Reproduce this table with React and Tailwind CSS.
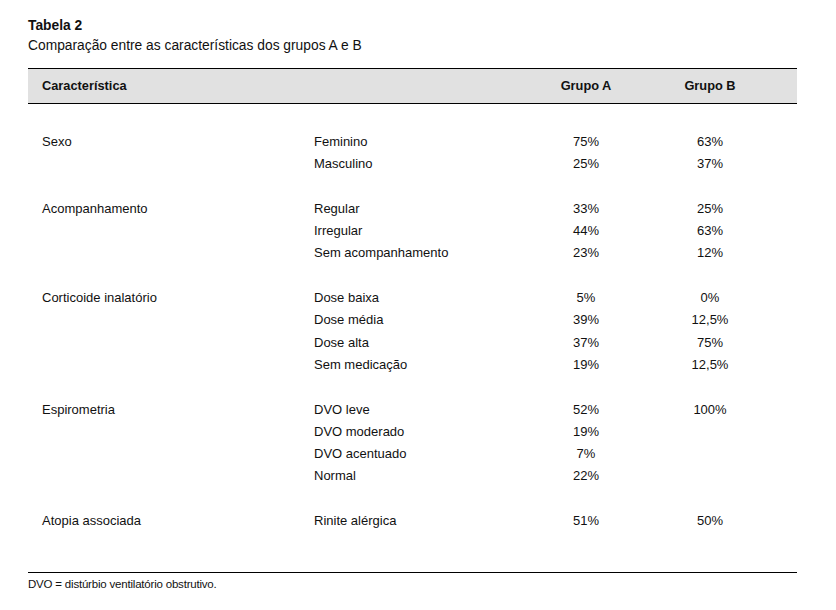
const groups = [
  {
    label: "Sexo",
    rows: [
      ["Feminino", "75%", "63%"],
      ["Masculino", "25%", "37%"],
    ],
  },
  {
    label: "Acompanhamento",
    rows: [
      ["Regular", "33%", "25%"],
      ["Irregular", "44%", "63%"],
      ["Sem acompanhamento", "23%", "12%"],
    ],
  },
  {
    label: "Corticoide inalatório",
    rows: [
      ["Dose baixa", "5%", "0%"],
      ["Dose média", "39%", "12,5%"],
      ["Dose alta", "37%", "75%"],
      ["Sem medicação", "19%", "12,5%"],
    ],
  },
  {
    label: "Espirometria",
    rows: [
      ["DVO leve", "52%", "100%"],
      ["DVO moderado", "19%", ""],
      ["DVO acentuado", "7%", ""],
      ["Normal", "22%", ""],
    ],
  },
  {
    label: "Atopia associada",
    rows: [["Rinite alérgica", "51%", "50%"]],
  },
]

export default function App() {
  return (
    <div className="w-[836px] h-[610px] bg-white text-[#111] font-['Liberation_Sans',Arial,sans-serif] pl-[28px] pt-[18px]">
      <div className="w-[769px]">
        <h1 className="text-[13.8px] font-bold leading-[16px]">Tabela 2</h1>
        <p className="text-[13.8px] leading-[16px] mt-[4px]">
          Comparação entre as características dos grupos A e B
        </p>

        <div className="mt-[14px] border-t border-b border-black bg-[#e1e1e1] h-[36px] grid grid-cols-[272px_222px_100px_24px_100px] items-center pl-[14px] text-[12.8px] font-bold">
          <div>Característica</div>
          <div></div>
          <div className="text-center">Grupo A</div>
          <div></div>
          <div className="text-center">Grupo B</div>
        </div>

        <div className="pt-[27px] pb-[40px] text-[13px] leading-[22.3px]">
          {groups.map((g, gi) => (
            <div key={gi} className={gi > 0 ? "mt-[22.3px]" : ""}>
              {g.rows.map((r, ri) => (
                <div key={ri} className="grid grid-cols-[272px_222px_100px_24px_100px] pl-[14px]">
                  <div>{ri === 0 ? g.label : ""}</div>
                  <div>{r[0]}</div>
                  <div className="text-center">{r[1]}</div>
                  <div></div>
                  <div className="text-center">{r[2]}</div>
                </div>
              ))}
            </div>
          ))}
        </div>

        <div className="border-t border-black pt-[4px]">
          <p className="text-[11.5px] leading-[14px] font-['Liberation_Sans_Narrow','Liberation_Sans',sans-serif] tracking-[-0.2px]">
            DVO = distúrbio ventilatório obstrutivo.
          </p>
        </div>
      </div>
    </div>
  )
}
